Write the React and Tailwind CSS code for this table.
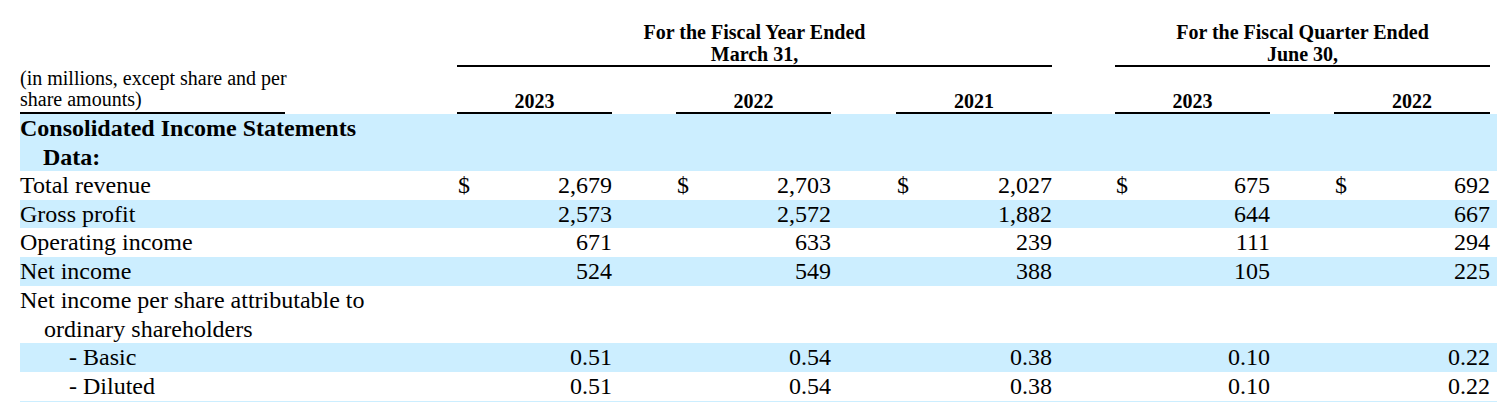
import React from "react";

const cols = ["col-start-3", "col-start-5", "col-start-7", "col-start-9", "col-start-11"];

const rows = [
  { label: "Total revenue", dollar: true, values: ["2,679", "2,703", "2,027", "675", "692"], blue: false },
  { label: "Gross profit", values: ["2,573", "2,572", "1,882", "644", "667"], blue: true },
  { label: "Operating income", values: ["671", "633", "239", "111", "294"], blue: false },
  { label: "Net income", values: ["524", "549", "388", "105", "225"], blue: true },
];

const perShare = [
  { label: "- Basic", values: ["0.51", "0.54", "0.38", "0.10", "0.22"], blue: true },
  { label: "- Diluted", values: ["0.51", "0.54", "0.38", "0.10", "0.22"], blue: false },
];

const grid =
  "grid grid-cols-[265px_172px_155px_64px_155px_65px_156px_63px_155px_64px_156px_7px]";

const DataRow = ({ row, indent }) => (
  <div className={`${grid} text-[24px] leading-[28.7px] ${row.blue ? "bg-[#cceeff]" : ""}`}>
    <div className={`col-span-2 whitespace-nowrap ${indent ? "pl-[49px]" : ""}`}>{row.label}</div>
    {row.values.map((v, i) => (
      <div key={i} className={`${cols[i]} flex justify-between pl-[1px]`}>
        <span>{row.dollar ? "$" : ""}</span>
        <span>{v}</span>
      </div>
    ))}
  </div>
);

export default function App() {
  return (
    <div className="w-[1500px] h-[402px] overflow-hidden bg-white pl-[20px] text-black font-['Liberation_Serif','Times_New_Roman',serif]">
      <div className="w-[1477px]">
        {/* group headers */}
        <div className={`${grid} h-[67px] items-end`}>
          <div className="col-start-3 col-span-5 border-b-2 border-black text-center text-[20px] leading-[22px] font-bold">
            For the Fiscal Year Ended
            <br />
            March 31,
          </div>
          <div className="col-start-9 col-span-3 border-b-2 border-black text-center text-[20px] leading-[22px] font-bold">
            For the Fiscal Quarter Ended
            <br />
            June 30,
          </div>
        </div>

        {/* years */}
        <div className={`${grid} h-[47px] items-end`}>
          <div className="col-start-1 whitespace-nowrap border-b-2 border-black text-[20px] leading-[21px] pb-[2px]">
            (in millions, except share and per
            <br />
            share amounts)
          </div>
          {["2023", "2022", "2021", "2023", "2022"].map((y, i) => (
            <div key={i} className={`${cols[i]} border-b-2 border-black text-center text-[20px] leading-[22px] font-bold`}>
              {y}
            </div>
          ))}
        </div>

        {/* section heading */}
        <div className={`${grid} bg-[#cceeff] text-[24px] leading-[28.5px] font-bold`}>
          <div className="col-span-2 whitespace-nowrap">
            <div>Consolidated Income Statements</div>
            <div className="pl-[23px]">Data:</div>
          </div>
        </div>

        {rows.map((r, i) => (
          <DataRow key={i} row={r} />
        ))}

        <div className={`${grid} text-[24px] leading-[28.7px]`}>
          <div className="col-span-2 whitespace-nowrap">
            <div>Net income per share attributable to</div>
            <div className="pl-[24px]">ordinary shareholders</div>
          </div>
        </div>

        {perShare.map((r, i) => (
          <DataRow key={i} row={r} indent />
        ))}

        <div className="h-[4px] bg-[#cceeff]" />
      </div>
    </div>
  );
}
